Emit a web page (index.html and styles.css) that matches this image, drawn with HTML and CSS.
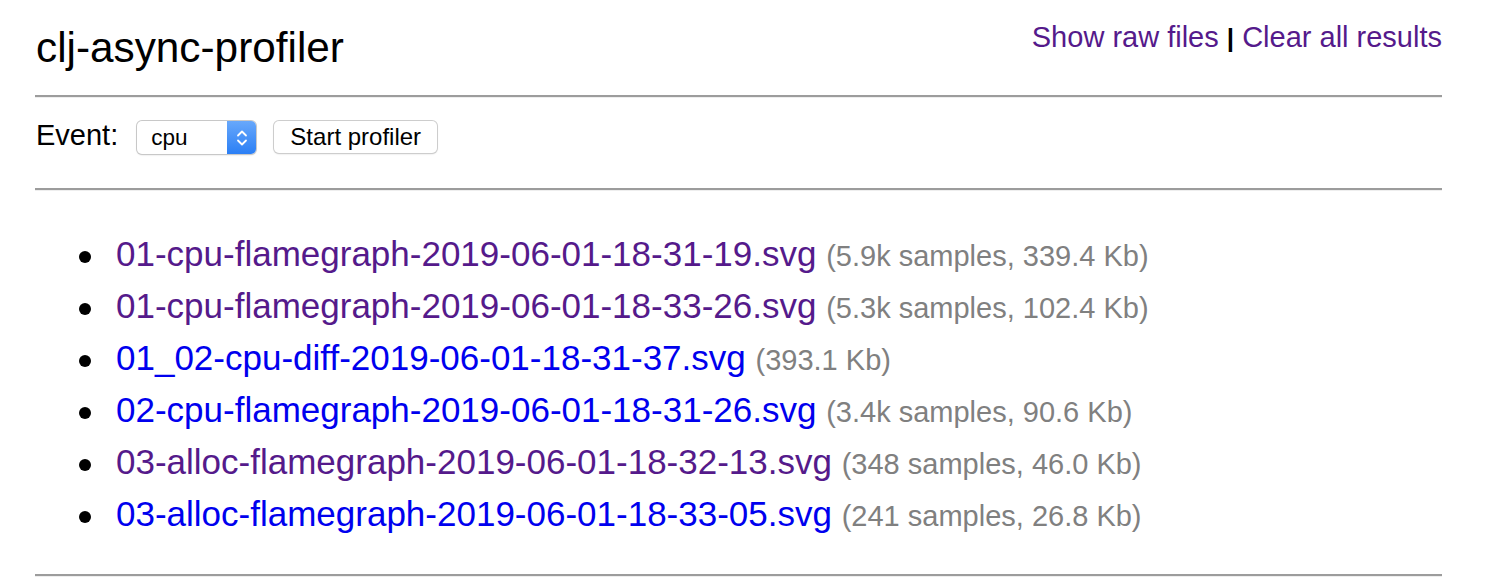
FILE: index.html
```html
<!DOCTYPE html>
<html>
<head>
<meta charset="utf-8">
<title>clj-async-profiler</title>
<link rel="stylesheet" href="styles.css">
</head>
<body>
<div class="page">
  <header class="header">
    <h1 class="title">clj-async-profiler</h1>
    <div class="toplinks">
      <a class="visited" href="#">Show raw files</a> <span class="sep">|</span> <a class="visited" href="#">Clear all results</a>
    </div>
  </header>
  <hr class="rule">
  <form class="controls">
    <label class="label" for="event">Event:</label>
    <div class="select-wrap">
      <select id="event" class="select">
        <option>cpu</option>
        <option>alloc</option>
      </select>
      <span class="select-arrows">
        <svg width="12" height="20" viewBox="0 0 12 20" fill="none" stroke="#fff" stroke-width="1.8" stroke-linecap="round" stroke-linejoin="round">
          <path d="M2 7.5 L6 3.5 L10 7.5"/>
          <path d="M2 12.5 L6 16.5 L10 12.5"/>
        </svg>
      </span>
    </div>
    <button type="button" class="button">Start profiler</button>
  </form>
  <hr class="rule">
  <ul class="files">
    <li><a class="visited" href="#">01-cpu-flamegraph-2019-06-01-18-31-19.svg</a> <span class="meta">(5.9k samples, 339.4 Kb)</span></li>
    <li><a class="visited" href="#">01-cpu-flamegraph-2019-06-01-18-33-26.svg</a> <span class="meta">(5.3k samples, 102.4 Kb)</span></li>
    <li><a href="#">01_02-cpu-diff-2019-06-01-18-31-37.svg</a> <span class="meta">(393.1 Kb)</span></li>
    <li><a href="#">02-cpu-flamegraph-2019-06-01-18-31-26.svg</a> <span class="meta">(3.4k samples, 90.6 Kb)</span></li>
    <li><a class="visited" href="#">03-alloc-flamegraph-2019-06-01-18-32-13.svg</a> <span class="meta">(348 samples, 46.0 Kb)</span></li>
    <li><a href="#">03-alloc-flamegraph-2019-06-01-18-33-05.svg</a> <span class="meta">(241 samples, 26.8 Kb)</span></li>
  </ul>
  <hr class="rule">
</div>
</body>
</html>
```

FILE: styles.css
```css
html, body {
  margin: 0;
  padding: 0;
  background: #ffffff;
}

body {
  font-family: "Liberation Sans", Arial, Helvetica, sans-serif;
  font-size: 29px;
  color: #000000;
}

.page {
  width: 1407px;
  margin-left: 35px;
}

a {
  color: #0000ee;
  text-decoration: none;
}

a.visited {
  color: #551a8b;
}

.header {
  display: flex;
  justify-content: space-between;
  align-items: flex-start;
  height: 95px;
}

.title {
  margin: 24px 0 0 1px;
  font-size: 42.3px;
  font-weight: normal;
  line-height: 48px;
}

.toplinks {
  margin-top: 20px;
  line-height: 34px;
}

.sep {
  color: #000;
  font-weight: bold;
  font-size: 26px;
}

.rule {
  margin: 0;
  height: 0;
  border: 0;
  border-top: 2px solid #9c9c9c;
  border-bottom: 1px solid #eeeeee;
}

.controls {
  display: flex;
  align-items: flex-start;
  height: 67px;
  margin: 0;
  padding: 23px 0 0 1px;
}

.label {
  margin-right: 19px;
  margin-top: -2px;
  line-height: 33px;
}

.select-wrap {
  display: inline-flex;
  height: 33px;
  width: 119px;
  border-radius: 5px;
  box-shadow: 0 0 0 1px #c8c8c8, 0 1px 2px rgba(0,0,0,0.18);
  overflow: hidden;
  background: #ffffff;
  margin-right: 18px;
}

.select {
  appearance: none;
  -webkit-appearance: none;
  border: 0;
  outline: 0;
  background: transparent;
  font-family: "Liberation Sans", Arial, sans-serif;
  font-size: 22.5px;
  color: #000;
  padding: 0 0 0 14px;
  margin: 0;
  flex: 1;
  width: 0;
  height: 33px;
}

.select-arrows {
  width: 29px;
  display: flex;
  align-items: center;
  justify-content: center;
  background: linear-gradient(#68a8fb, #2b7ff5);
}

.button {
  height: 32px;
  width: 163px;
  border: 0;
  border-radius: 5px;
  box-shadow: 0 0 0 1px #cdcdcd, 0 1px 2px rgba(0,0,0,0.18);
  background: #ffffff;
  font-family: "Liberation Sans", Arial, sans-serif;
  font-size: 24px;
  color: #000;
  padding: 0;
}

.files {
  list-style: none;
  margin: 37px 0 34px 0;
  padding-left: 44px;
  font-size: 35px;
  line-height: 52px;
}

.files li {
  height: 52px;
  white-space: nowrap;
}

.files li::before {
  content: "";
  display: inline-block;
  width: 12px;
  height: 12px;
  border-radius: 50%;
  background: #000;
  margin-right: 25px;
  vertical-align: 3px;
}

.meta {
  color: #808080;
  font-size: 29px;
  line-height: 1;
}
```
